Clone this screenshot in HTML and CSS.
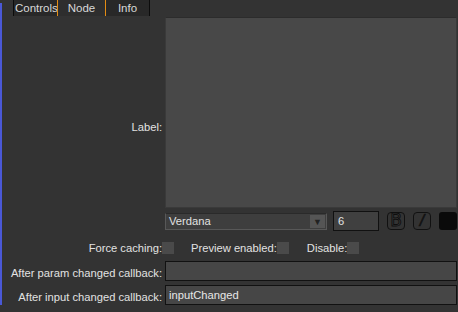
FILE: index.html
```html
<!DOCTYPE html>
<html lang="en">
<head>
    <meta charset="UTF-8" />
    <title>Node settings</title>
    <link rel="stylesheet" href="styles.css">
</head>
<body>

<!-- Вкладки -->
<div class="tabs">
    <div class="tab tab-first">Controls</div>
    <div class="tab tab-active">Node</div>
    <div class="tab tab-last">Info</div>
</div>

<!-- Форма узла -->
<div class="form">
    <div class="label label-tall">Label:</div>
    <div class="text-area"></div>

    <div class="font-row">
        <div class="combo">
            <span>Verdana</span>
            <span class="combo-arrow">&#9660;</span>
        </div>
        <div class="spin">6</div>
        <div class="style-btn">B</div>
        <div class="style-btn style-italic">/</div>
        <div class="color-btn"></div>
    </div>

    <div class="label check-label">Force caching:</div>
    <div class="check-row">
        <span class="checkbox"></span>
        <span class="check-text check-preview">Preview enabled:</span>
        <span class="checkbox"></span>
        <span class="check-text check-disable">Disable:</span>
        <span class="checkbox"></span>
    </div>

    <div class="label">After param changed callback:</div>
    <div class="line-edit"></div>

    <div class="label">After input changed callback:</div>
    <div class="line-edit">inputChanged</div>
</div>

</body>
</html>
```

FILE: styles.css
```css
/* общий фон и синяя линия слева */
body {
    margin: 0;
    padding: 0;
    font-family: "Liberation Sans", Arial, sans-serif;
    font-size: 11.2px;
    color: #e2e2e2;
    background: linear-gradient(#4a58d6, #4a58d6) 0 3px / 2px 302px no-repeat, #333333;
    height: 312px;
    overflow: hidden;
}

/* вкладки */
.tabs {
    display: flex;
    margin-left: 13px;
    height: 16px;
}
.tab {
    box-sizing: border-box;
    height: 16px;
    line-height: 16px;
    background-color: #282828;
    color: #d8d8d8;
    font-size: 11.5px;
    text-align: center;
}
.tab-first {
    width: 44px;
    border-left: 1px solid #0c0c0c;
    padding-left: 1px;
    text-align: left;
}
.tab-active {
    width: 49px;
    border-left: 1px solid #e38c14;
    border-right: 1px solid #e38c14;
    background-color: #2e2e2e;
}
.tab-last {
    width: 44px;
    border-right: 1px solid #0c0c0c;
}

/* сетка формы */
.form {
    display: grid;
    grid-template-columns: 162px 292px;
    column-gap: 3px;
    margin-top: 1px;
}
.label {
    text-align: right;
    align-self: center;
    white-space: nowrap;
}
.label-tall {
    grid-row: span 2;
    padding-top: 6px;
}

.text-area {
    height: 191px;
    box-sizing: border-box;
    background-color: #484848;
    border: 1px solid #3a3a3a;
    border-top-color: #2c2c2c;
}

/* строка шрифта */
.font-row {
    display: flex;
    align-items: center;
    margin-top: 3px;
    height: 20px;
}
.combo {
    box-sizing: border-box;
    width: 162px;
    height: 17px;
    display: flex;
    align-items: center;
    justify-content: space-between;
    padding-left: 3px;
    padding-right: 1px;
    background-color: #3e3e3e;
    border: 1px solid #585858;
    border-top-color: #2a2a2a;
}
.combo-arrow {
    width: 15px;
    height: 13px;
    background-color: #555555;
    color: #222222;
    font-size: 9px;
    line-height: 14px;
    text-align: center;
}
.spin {
    box-sizing: border-box;
    width: 46px;
    height: 20px;
    margin-left: 6px;
    padding-left: 4px;
    line-height: 18px;
    background-color: #404040;
    border: 1px solid #111111;
}
.style-btn {
    box-sizing: border-box;
    width: 18px;
    height: 18px;
    margin-left: 8px;
    border: 1.5px solid #111111;
    border-radius: 4px;
    color: #3a3a3a;
    -webkit-text-stroke: 0.9px #0e0e0e;
    font-family: "DejaVu Sans", sans-serif;
    font-size: 17px;
    line-height: 15px;
    text-align: center;
}
.style-italic {
    font-family: "Liberation Sans", sans-serif;
    font-size: 16px;
    font-style: italic;
    color: #111111;
    -webkit-text-stroke: 0.6px #111111;
}
.color-btn {
    width: 18px;
    height: 18px;
    margin-left: 8px;
    background-color: #0a0a0a;
    border-radius: 3px;
}

/* строка флажков */
.check-label {
    margin-top: 11px;
    margin-bottom: 7px;
}
.check-row {
    display: flex;
    align-items: center;
    margin-left: -3px;
    margin-top: 11px;
    margin-bottom: 7px;
}
.checkbox {
    width: 12px;
    height: 12px;
    background-color: #4a4a4a;
}
.check-preview {
    margin-left: 17px;
}
.check-disable {
    margin-left: 18px;
}

/* поля ввода */
.line-edit {
    box-sizing: border-box;
    height: 20px;
    margin-bottom: 4px;
    padding-left: 3px;
    line-height: 18px;
    background-color: #464646;
    border: 1px solid #111111;
    color: #e6e6e6;
}
```
